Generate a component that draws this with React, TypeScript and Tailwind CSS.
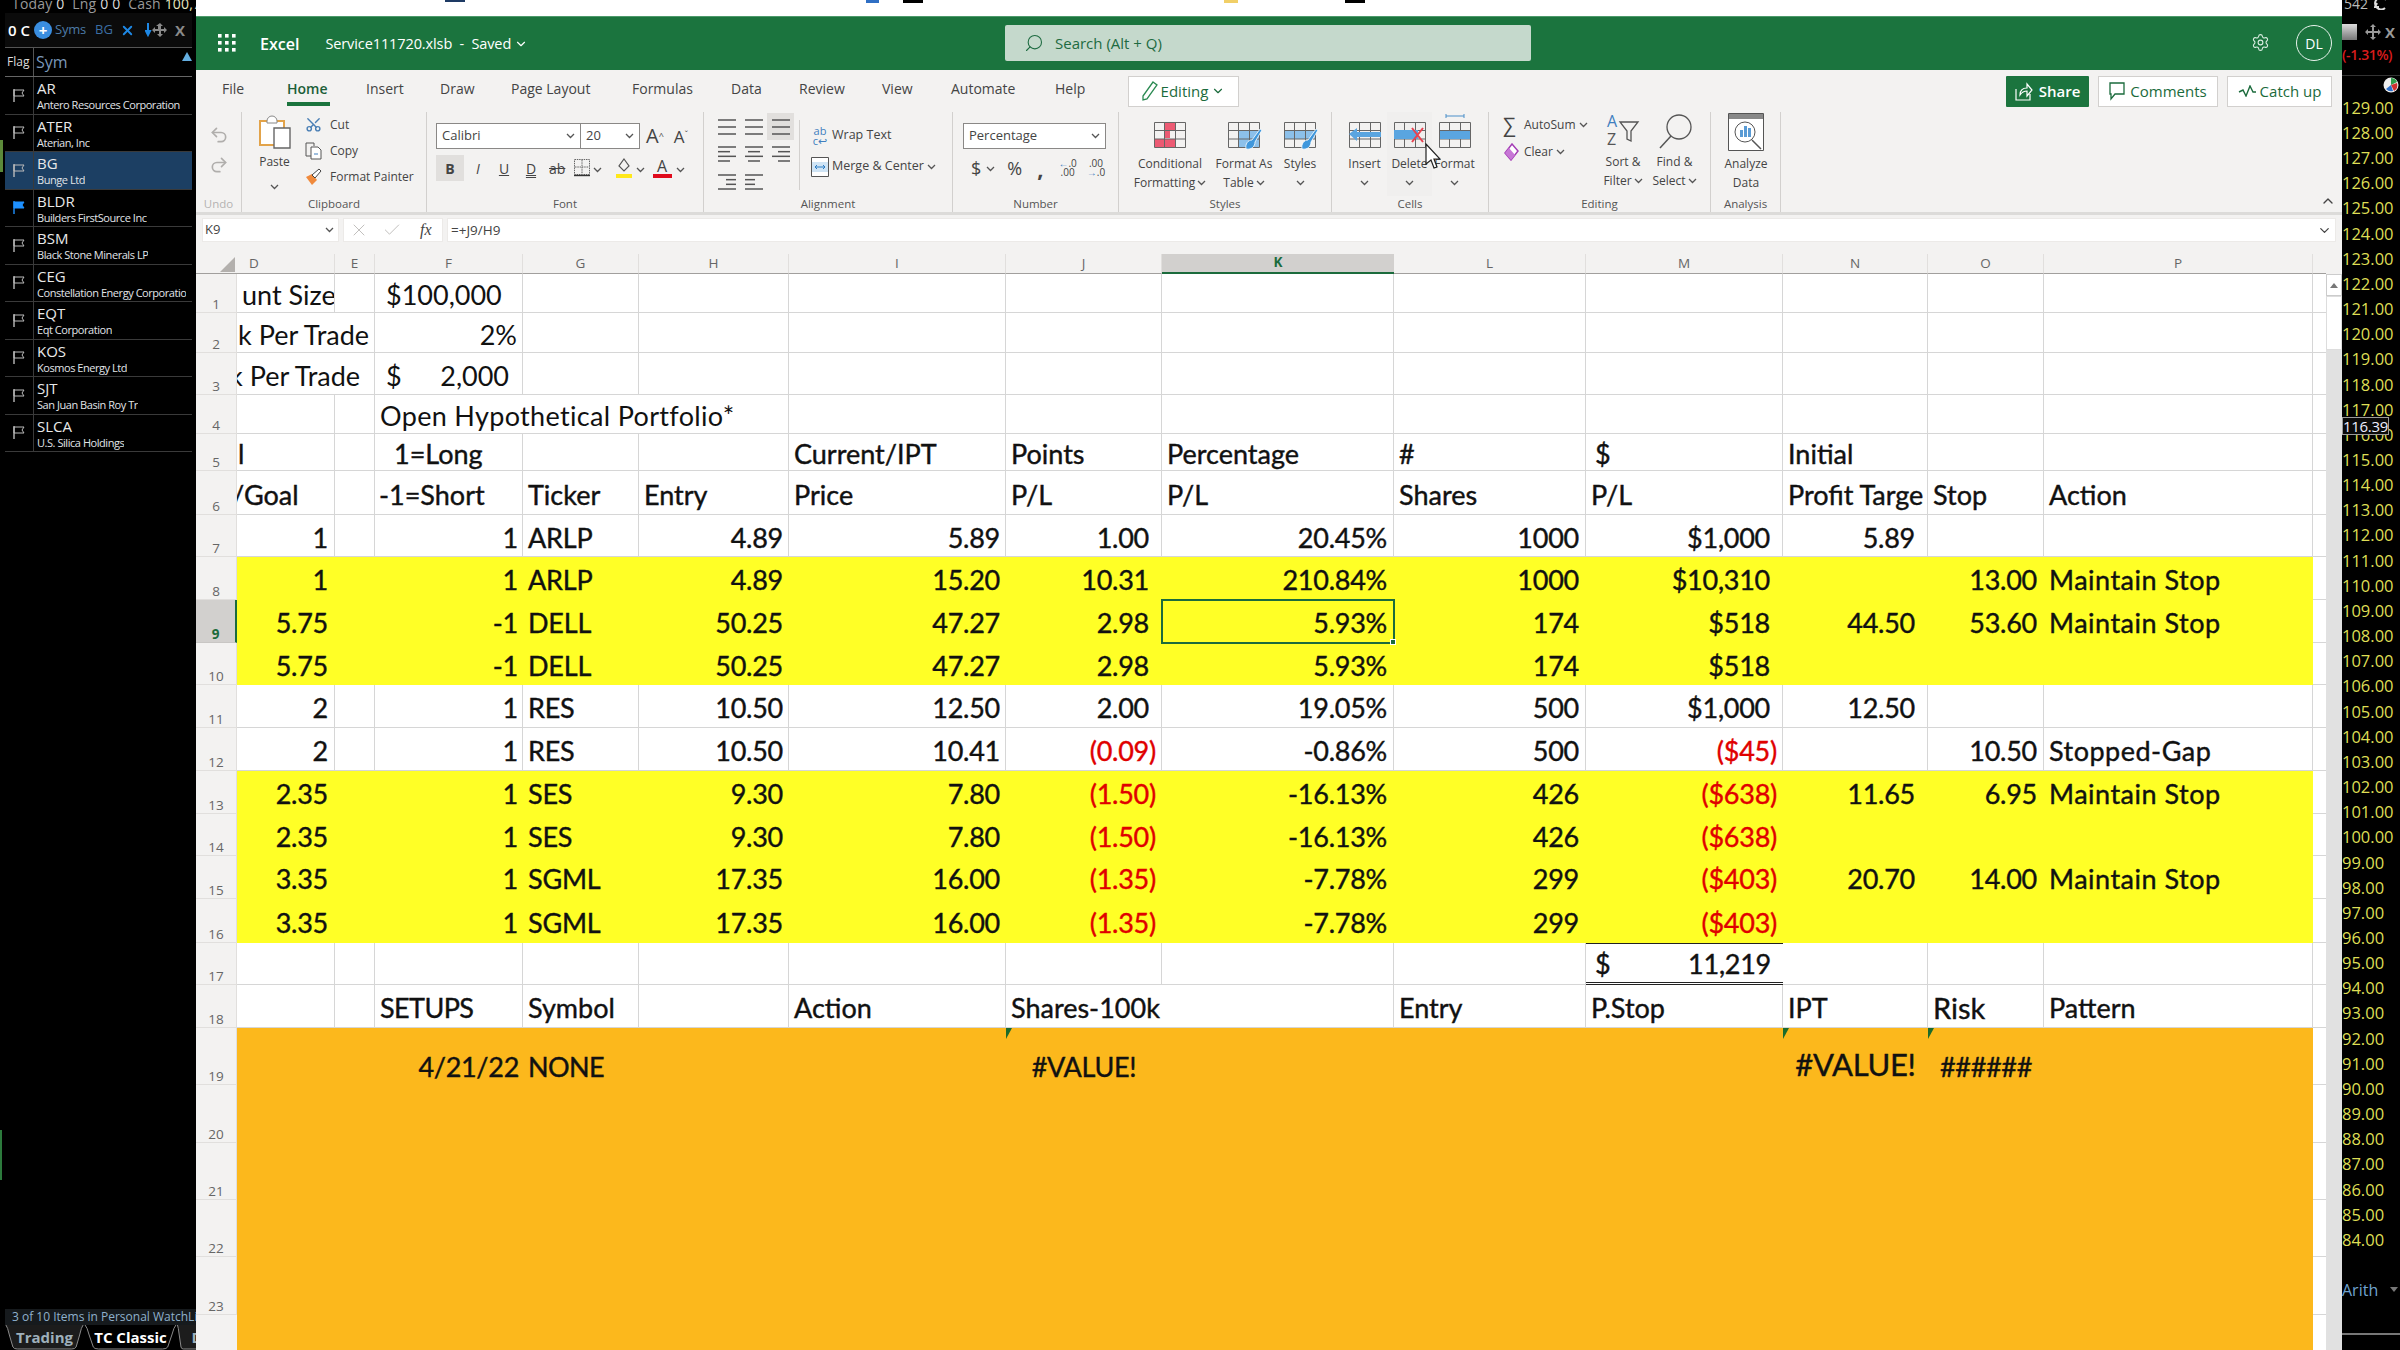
import React from "react";
import { Scissors, Undo2, Redo2, Settings, Search, X, Check, ChevronDown, ChevronUp } from "lucide-react";

const Chev = ({ c = "#555" }: { c?: string }) => (
  <svg width="9" height="6" viewBox="0 0 9 6" className="inline-block shrink-0"><path d="M1 1l3.5 3.5L8 1" fill="none" stroke={c} strokeWidth="1.3" /></svg>
);

const Flag = ({ on }: { on?: boolean }) => (
  <svg width="14" height="15" viewBox="0 0 14 15">
    <path d="M2 1v13" stroke={on ? "#1e90ff" : "#bbb"} strokeWidth="1.4" />
    <path d="M2 2h10l-2 3 2 3H2z" fill={on ? "#1e90ff" : "none"} stroke={on ? "#1e90ff" : "#bbb"} strokeWidth="1" />
  </svg>
);

const watch = [
  ["AR", "Antero Resources Corporation"],
  ["ATER", "Aterian, Inc"],
  ["BG", "Bunge Ltd"],
  ["BLDR", "Builders FirstSource Inc"],
  ["BSM", "Black Stone Minerals LP"],
  ["CEG", "Constellation Energy Corporatio"],
  ["EQT", "Eqt Corporation"],
  ["KOS", "Kosmos Energy Ltd"],
  ["SJT", "San Juan Basin Roy Tr"],
  ["SLCA", "U.S. Silica Holdings"],
];

const Tab = ({ w, on, children }: { w: string; on?: boolean; children: React.ReactNode }) => (
  <div className={`relative h-[25px] flex items-center justify-center shrink-0 ${w}`}>
    <svg className="absolute inset-0 w-full h-full" viewBox="0 0 90 25" preserveAspectRatio="none">
      <path d="M1 0 Q3 2 5 10 L9 22 Q10 24 14 24 H76 Q80 24 81 22 L85 10 Q87 2 89 0" fill={on ? "#000" : "#1c1c1c"} stroke="#8a8a8a" strokeWidth="1" vectorEffect="non-scaling-stroke" />
    </svg>
    <span className={`relative font-bold text-[15px] ${on ? "text-white" : "text-[#9fb0bb]"}`}>{children}</span>
  </div>
);

function LeftPanel() {
  return (
    <aside className="w-[196px] h-full shrink-0 bg-black flex flex-col relative font-['Open_Sans',sans-serif] overflow-hidden">
      <div className="absolute left-0 top-[140px] w-[3px] h-[32px] bg-[#5c8a3a]" />
      <div className="absolute left-0 top-[1130px] w-[2px] h-[50px] bg-[#2c7a3c]" />
      <div className="h-[13px] pl-[12px] text-[14px] leading-[8px] text-[#999] whitespace-nowrap overflow-hidden tracking-[0.2px]">
        <span>Today</span> <span className="text-[#ddd]">0</span>&nbsp; <span>Lng</span> <span className="text-[#ddd]">0 0</span>&nbsp; <span>Cash</span> <span className="text-[#e8e8c0]">100,7</span>
      </div>
      <div className="h-[35px] ml-[5px] w-[187px] flex items-center bg-[#0b0b0b] border-b border-[#555] relative whitespace-nowrap">
        <span className="ml-[3px] w-[26px] shrink-0 text-white font-semibold text-[15px]">0 C</span>
        <span className="w-[18px] h-[18px] shrink-0 rounded-full bg-[#3a8ee0] flex items-center justify-center text-white text-[15px] leading-none font-bold">+</span>
        <span className="ml-[3px] text-[#4d7ca8] text-[13px] tracking-[-0.2px]">Syms</span>
        <span className="ml-[9px] text-[#3c6ea5] text-[13px]">BG</span>
        <X className="ml-[7px] shrink-0 text-[#1e88e5]" size={15} strokeWidth={3} />
        <svg className="ml-[10px] shrink-0" width="28" height="16" viewBox="0 0 28 16">
          <path d="M3 1v9M1 9l2 4 2-4z" stroke="#1e88e5" strokeWidth="2" fill="#1e88e5" />
          <path d="M15 1l3 3h-2v3h3V5l3 3-3 3v-2h-3v3h2l-3 3-3-3h2V9H10v2L7 8l3-3v2h3V4h-2z" fill="#8a8a8a" />
        </svg>
        <span className="ml-[2px] text-[#8a8a8a] font-bold text-[15px]">X</span>
      </div>
      <div className="ml-[5px] w-[187px] h-[29px] flex border-b border-[#666] relative">
        <div className="w-[29px] border-r border-[#555] flex items-center pl-[2px] text-[#ddd] text-[12px]">Flag</div>
        <div className="pl-[2px] flex items-center text-[#7a97b8] text-[16px]">Sym</div>
        <div className="absolute right-0 top-[4px] w-0 h-0 border-l-[5px] border-r-[5px] border-b-[9px] border-l-transparent border-r-transparent border-b-[#64aee0]" />
      </div>
      {watch.map(([s, n], i) => (
        <div key={s} className={`ml-[5px] w-[187px] h-[37.5px] flex border-b border-[#3a3a3a] ${i === 2 ? "bg-[#1c3f63]" : ""}`}>
          <div className="w-[29px] border-r border-[#3a3a3a] flex items-center pl-[7px]"><Flag on={i === 3} /></div>
          <div className="pl-[3px] pt-[1px] flex flex-col justify-center whitespace-nowrap overflow-hidden">
            <span className="text-[#e8e8e8] text-[15px] leading-[18px]">{s}</span>
            <span className="text-[#e0e4e8] text-[11px] leading-[15px] tracking-[-0.45px]">{n}</span>
          </div>
        </div>
      ))}
      <div className="mt-auto">
        <div className="h-[16px] ml-[5px] bg-[#161a1d] pl-[7px] text-[12px] leading-[16px] text-[#8fb1cc] whitespace-nowrap overflow-hidden">3 of 10 Items in Personal WatchLi</div>
        <div className="flex ml-[5px] h-[25px] pt-0">
          <Tab w="w-[79px]">Trading</Tab>
          <Tab w="w-[93px]" on>TC Classic</Tab>
          <Tab w="w-[40px]">D</Tab>
        </div>
      </div>
    </aside>
  );
}

const prices = Array.from({ length: 46 }, (_, i) => 129 - i);

function RightPanel() {
  return (
    <aside className="w-[58px] h-full shrink-0 bg-black flex flex-col relative font-['Open_Sans',sans-serif] overflow-hidden">
      <div className="h-[16px] flex justify-between items-start text-[#bbb] text-[14px] leading-[8px]">
        <span className="ml-[2px]">542</span>
        <svg className="mr-[12px]" width="14" height="10" viewBox="0 0 14 10"><path d="M12 0a6 6 0 1 0-1 8M3 3l-2 4 4 0" fill="none" stroke="#ddd" strokeWidth="2" /></svg>
      </div>
      <div className="h-[32px] flex items-center">
        <div className="w-[15px] h-[16px] bg-gradient-to-b from-[#ddd] to-[#777]" />
        <svg className="ml-[8px]" width="16" height="16" viewBox="0 0 16 16"><path d="M8 0l3 3H9v4h4V5l3 3-3 3V9H9v4h2l-3 3-3-3h2V9H3v2L0 8l3-3v2h4V3H5z" fill="#999" /></svg>
        <span className="ml-[4px] text-[#999] font-bold text-[15px]">X</span>
      </div>
      <div className="h-[28px] text-[#d91c1c] text-[14px] leading-[14px] whitespace-nowrap border-b border-[#333] font-semibold tracking-[-0.4px]">(-1.31%)</div>
      <div className="h-[20.5px] -mt-[1px] flex justify-end items-center pr-[1px]">
        <svg width="16" height="16" viewBox="0 0 16 16">
          <circle cx="8" cy="8" r="7.5" fill="#eee" />
          <path d="M8 8L8 1a7 7 0 0 1 6 4z" fill="#2e9e4a" /><path d="M8 8l6-2a7 7 0 0 1-3 8z" fill="#d03030" /><path d="M8 8l2 6a7 7 0 0 1-7-2z" fill="#2c6fc9" />
        </svg>
      </div>
      {prices.map((p) => (
        <div key={p} className="h-[25.16px] shrink-0 flex items-center text-[16.5px] text-[#dede55] whitespace-nowrap leading-none">{p.toFixed(2)}</div>
      ))}
      <div className="mt-[26px] flex justify-between items-center text-[#6fa3cf] text-[16px] leading-[22px]">
        <span>Arith</span>
        <span className="mr-[2px] w-0 h-0 border-l-[4px] border-r-[4px] border-t-[5px] border-l-transparent border-r-transparent border-t-[#777]" />
      </div>
      <div className="mt-[32px] h-[2px] bg-[#777]" />
      <div className="absolute left-0 top-[417px] w-[47px] h-[18px] bg-[#0a0a0a] border border-[#9a9a9a] flex items-center text-[#eef] text-[15px] leading-none tracking-[-0.3px]">116.39</div>
    </aside>
  );
}

const Lines = ({ rows }: { rows: [number, number][] }) => (
  <svg width="20" height="18" viewBox="0 0 20 18">
    {rows.map(([a, b], i) => <path key={i} d={`M${a} ${2 + i * (14 / (rows.length - 1))}H${b}`} stroke="#555" strokeWidth="1.5" />)}
  </svg>
);

const Tbl = ({ children, top }: { children?: React.ReactNode; top?: React.ReactNode }) => (
  <svg width="36" height="38" viewBox="0 0 36 38">
    <g transform="translate(2 9)">
      {children}
      <path d="M.5.5h31v25H.5zM10.5.5v25M21.5.5v25M.5 8.5h31M.5 17h31" fill="none" stroke="#666" strokeWidth="1" />
    </g>
    {top}
  </svg>
);

const Brush = () => <path d="M20 36c6 1 9-3 9-7l7-12-2-1-8 11c-4 0-7 4-6 9z" fill="#3f97dc" stroke="#fff" strokeWidth=".8" />;

const VBtn = ({ w, icon, l1, l2, h = "h-[42px]" }: { w: string; icon: React.ReactNode; l1: React.ReactNode; l2?: React.ReactNode; h?: string }) => (
  <div className={`flex flex-col items-center shrink-0 ${w}`}>
    <div className={`${h} w-full flex items-end justify-center pb-[3px]`}>{icon}</div>
    <div className="h-[19px] leading-[19px] whitespace-nowrap">{l1}</div>
    <div className="h-[19px] leading-[19px] whitespace-nowrap flex items-center gap-[2px]">{l2 ?? <Chev />}</div>
  </div>
);

const Group = ({ w, label, light, children }: { w: string; label: string; light?: boolean; children: React.ReactNode }) => (
  <div className={`${w} shrink-0 h-[100px] flex flex-col border-r border-[#d2d0ce]`}>
    <div className="h-[84px] flex">{children}</div>
    <div className={`h-[16px] leading-[16px] text-center text-[11.5px] ${light ? "text-[#b5b3b1]" : "text-[#555]"}`}>{label}</div>
  </div>
);

const Select = ({ w, text, extra }: { w: string; text: string; extra?: string }) => (
  <div className={`${w} h-[26px] flex items-center justify-between px-[5px] bg-white border-[#8a8886] ${extra ?? "border"}`}>
    <span className="text-[13px] text-[#444]">{text}</span><Chev />
  </div>
);

const Ribbon = () => (
  <div className="h-[100px] flex bg-[#f3f2f1] text-[12px] text-[#444]">
    <Group w="w-[46px]" label="Undo" light>
      <div className="w-full flex flex-col items-center pt-[13px] gap-[10px] text-[#b0aeac]"><Undo2 size={20} /><Redo2 size={20} /></div>
    </Group>
    <Group w="w-[185px]" label="Clipboard">
      <div className="w-[63px] flex flex-col items-center pl-[2px]">
        <svg className="mt-[3px]" width="36" height="34" viewBox="0 0 36 34">
          <path d="M3 6h24v24H3z" fill="#fff" stroke="#e2a34a" strokeWidth="2" /><path d="M10 6a5 5 0 0 1 10 0v2H10z" fill="#fff" stroke="#888" />
          <path d="M17 13h16v20H17z" fill="#fff" stroke="#666" strokeWidth="1.4" />
        </svg>
        <span className="mt-[4px] leading-[18px]">Paste</span>
        <span className="mt-[6px]"><Chev /></span>
      </div>
      <div className="flex flex-col">
        <div className="h-[25px] flex items-center gap-[8px]"><Scissors size={17} className="text-[#4a7fb5] rotate-[-90deg]" /><span>Cut</span></div>
        <div className="h-[27px] flex items-center gap-[8px]">
          <svg width="17" height="18" viewBox="0 0 17 18"><path d="M1 1h8l0 3M1 1v13h5" fill="none" stroke="#555" /><path d="M6 5h7l3 3v9H6z" fill="#fff" stroke="#555" /><path d="M9 12h4" stroke="#3f7fbf" /></svg>
          <span>Copy</span>
        </div>
        <div className="h-[26px] flex items-center gap-[8px]">
          <svg width="17" height="18" viewBox="0 0 17 18"><path d="M1 9l6-3 5 6-5 5z" fill="#f08a3c" /><path d="M7 7l7-6 2 2-6 7z" fill="#fff" stroke="#444" /></svg>
          <span className="whitespace-nowrap">Format Painter</span>
        </div>
      </div>
    </Group>
    <Group w="w-[277px]" label="Font">
      <div className="pl-[9px] pt-[11px] flex flex-col">
        <div className="flex items-center">
          <Select w="w-[145px]" text="Calibri" />
          <Select w="w-[59px]" text="20" extra="border border-l-0" />
          <span className="ml-[6px] text-[20px] leading-none text-[#444]">A<sup className="text-[9px]">^</sup></span>
          <span className="ml-[10px] text-[17px] leading-none text-[#444]">A<sup className="text-[9px]">ˇ</sup></span>
        </div>
        <div className="flex items-center mt-[6px] h-[26px] text-[14px] text-[#444]">
          <span className="w-[28px] h-[26px] bg-[#e1dfdd] flex items-center justify-center font-bold">B</span>
          <span className="ml-[8px] w-[12px] text-center italic">I</span>
          <span className="ml-[13px] w-[14px] text-center underline">U</span>
          <span className="ml-[13px] w-[14px] text-center underline decoration-double">D</span>
          <span className="ml-[11px] w-[16px] text-center line-through">ab</span>
          <svg className="ml-[9px]" width="16" height="18" viewBox="0 0 16 18"><path d="M.5.5h15v15H.5zM8 1v14M1 8h14" fill="none" stroke="#666" strokeDasharray="1.5 .8" /><path d="M0 16.5h16" stroke="#333" strokeWidth="1.4" /></svg>
          <span className="ml-[3px]"><Chev /></span>
          <svg className="ml-[13px]" width="18" height="20" viewBox="0 0 18 20"><path d="M9 1l5 7-5 5-5-5z" fill="none" stroke="#555" strokeWidth="1.2" /><path d="M1 16h16v4H1z" fill="#ffe81a" /></svg>
          <span className="ml-[3px]"><Chev /></span>
          <span className="ml-[7px] w-[20px] flex flex-col items-center leading-[16px] text-[16px]">A<span className="w-[19px] h-[4px] bg-[#e00b1c]" /></span>
          <span className="ml-[4px]"><Chev /></span>
        </div>
      </div>
    </Group>
    <Group w="w-[249px]" label="Alignment">
      <div className="pl-[9px] pt-[1px] grid grid-cols-[27px_27px_27px] grid-rows-[27px_28px_27px] place-items-center">
        <Lines rows={[[1, 19], [1, 19], [1, 19]]} />
        <Lines rows={[[1, 19], [1, 19], [1, 19]]} />
        <div className="w-[27px] h-[27px] bg-[#e1dfdd] flex items-center justify-center"><Lines rows={[[1, 19], [1, 19], [1, 19]]} /></div>
        <Lines rows={[[1, 19], [1, 13], [1, 19], [1, 13]]} />
        <Lines rows={[[1, 19], [4, 16], [1, 19], [4, 16]]} />
        <Lines rows={[[1, 19], [7, 19], [1, 19], [7, 19]]} />
        <Lines rows={[[1, 19], [9, 19], [9, 19], [1, 19]]} />
        <Lines rows={[[1, 19], [1, 11], [1, 11], [1, 19]]} />
        <span />
      </div>
      <div className="ml-[5px] mt-[8px] h-[70px] border-l border-[#d2d0ce] pl-[11px] flex flex-col">
        <div className="h-[31px] flex items-center gap-[3px] whitespace-nowrap">
          <span className="w-[18px] text-[11px] leading-[10px] text-[#3f7fbf] text-center">ab<br />c↩</span><span className="text-[12.5px]">Wrap Text</span>
        </div>
        <div className="h-[31px] flex items-center gap-[3px] whitespace-nowrap">
          <svg width="18" height="20" viewBox="0 0 18 20"><path d="M.5.5h17v19H.5z" fill="#fff" stroke="#555" /><path d="M1 5h16v10H1z" fill="#cfe4f5" /><path d="M4 10h10M4 10l2-2M4 10l2 2M14 10l-2-2M14 10l-2 2" stroke="#2b7cc4" fill="none" /></svg>
          <span className="text-[12.5px]">Merge &amp; Center</span><Chev />
        </div>
      </div>
    </Group>
    <Group w="w-[166px]" label="Number">
      <div className="pl-[10px] pt-[11px] flex flex-col">
        <Select w="w-[143px]" text="Percentage" />
        <div className="mt-[6px] h-[26px] flex items-center text-[#444]">
          <span className="ml-[8px] text-[18px] leading-none">$</span><span className="ml-[5px]"><Chev /></span>
          <span className="ml-[12px] text-[18px] leading-none">%</span>
          <span className="ml-[15px] text-[22px] leading-none font-bold">,</span>
          <span className="ml-[15px] text-[10px] leading-[9px] text-center"><span className="text-[#3f7fbf]">←</span>.0<br />.00</span>
          <span className="ml-[10px] text-[10px] leading-[9px] text-center">.00<br /><span className="text-[#3f7fbf]">→</span>.0</span>
        </div>
      </div>
    </Group>
    <Group w="w-[213px]" label="Styles">
      <div className="pl-[13px] flex">
        <VBtn w="w-[76px]" l1="Conditional" l2={<>Formatting<Chev /></>} icon={<Tbl><path d="M11 0h10v8H11zM11 8h5v8h-5zM1 17h20v8H1z" fill="#ec5a73" /></Tbl>} />
        <VBtn w="w-[72px]" l1="Format As" l2={<>Table<Chev /></>} icon={<Tbl top={<Brush />}><path d="M11 9h20v16H11z" fill="#8cc0ea" /></Tbl>} />
        <VBtn w="w-[40px]" l1="Styles" icon={<Tbl top={<Brush />}><path d="M1 9h30v8H1z" fill="#8cc0ea" /></Tbl>} />
      </div>
    </Group>
    <Group w="w-[157px]" label="Cells">
      <div className="pl-[10px] flex">
        <VBtn w="w-[45px]" l1="Insert" icon={<Tbl top={<path d="M2 21l8-6v4h24v5H10v4z" fill="#5aa5e0" />} />} />
        <div className="w-[45px] bg-[#f0efee]"><VBtn w="w-[45px]" l1="Delete" icon={<Tbl top={<><path d="M2 17h24v9H2z" fill="#5aa5e0" /><path d="M20 15l11 14M31 15L20 29" stroke="#e8414f" strokeWidth="2" /></>} />} /></div>
        <VBtn w="w-[45px]" l1="Format" icon={<Tbl top={<><path d="M3 18h30v8H3z" fill="#5aa5e0" /><path d="M9 3h18M9 1v4M27 1v4" stroke="#4a8fc9" /></>} />} />
      </div>
    </Group>
    <Group w="w-[222px]" label="Editing">
      <div className="pl-[14px] w-[108px] flex flex-col shrink-0">
        <div className="h-[26px] flex items-center gap-[3px] whitespace-nowrap"><span className="text-[20px] leading-none w-[18px] text-[#444]">∑</span><span>AutoSum</span><Chev /></div>
        <div className="h-[28px] flex items-center gap-[3px] whitespace-nowrap">
          <svg width="18" height="18" viewBox="0 0 18 18"><path d="M9 1l6 7-7 9-6-7z" fill="#fff" stroke="#a43db5" strokeWidth="1.5" /><path d="M2 10l4-5 6 7-4 5z" fill="#c777d6" /></svg>
          <span>Clear</span><Chev />
        </div>
      </div>
      <VBtn w="w-[52px]" h="h-[40px]" l1="Sort &" l2={<>Filter<Chev /></>} icon={
        <svg width="34" height="36" viewBox="0 0 34 36"><text x="1" y="14" fontSize="16" fill="#3f7fbf" fontFamily="Open Sans">A</text><text x="1" y="32" fontSize="16" fill="#555" fontFamily="Open Sans">Z</text><path d="M14 9h18l-7 9v10l-4-2v-8z" fill="none" stroke="#555" strokeWidth="1.3" /></svg>
      } />
      <VBtn w="w-[51px]" h="h-[40px]" l1="Find &" l2={<>Select<Chev /></>} icon={
        <svg width="34" height="36" viewBox="0 0 34 36"><circle cx="21" cy="14" r="12" fill="none" stroke="#555" strokeWidth="1.3" /><path d="M13 23L2 35" stroke="#555" strokeWidth="1.5" /></svg>
      } />
    </Group>
    <Group w="w-[70px]" label="Analysis">
      <VBtn w="w-[70px]" l1="Analyze" l2="Data" icon={
        <svg width="36" height="38" viewBox="0 0 36 38"><path d="M.5.5h35v37H.5z" fill="#fff" stroke="#555" /><path d="M1 1h34v5H1z" fill="#888" /><circle cx="17" cy="19" r="10" fill="#fff" stroke="#555" /><path d="M12 17h3v7h-3zM16 13h3v11h-3zM20 15h3v9h-3z" fill="#5a9bd5" /><path d="M24 27l9 9" stroke="#555" strokeWidth="1.5" /></svg>
      } />
    </Group>
    <div className="flex-1 flex items-end justify-end pb-[3px] pr-[6px]"><ChevronUp size={16} className="text-[#444]" /></div>
  </div>
);

const Top = () => (
  <>
    <div className="h-[16px] bg-white flex items-start">
      <div className="ml-[249px] w-[20px] h-[2px] bg-[#1e3a64]" />
      <div className="ml-[401px] w-[13px] h-[3px] bg-[#2f6fc4]" />
      <div className="ml-[24px] w-[20px] h-[3px] bg-black" />
      <div className="ml-[301px] w-[14px] h-[3px] bg-[#f1cf67]" />
      <div className="ml-[107px] w-[20px] h-[3px] bg-black" />
    </div>
    <div className="h-[54px] bg-[#1b743e] border-t border-[#4d9a6b] flex items-center text-white relative font-['Open_Sans',sans-serif]">
      <svg className="ml-[22px] -mt-[2px]" width="18" height="18" viewBox="0 0 18 18" fill="#fff">
        {[0, 7, 14].flatMap((x) => [0, 7, 14].map((y) => <rect key={`${x}${y}`} x={x} y={y} width="3.6" height="3.6" />))}
      </svg>
      <span className="ml-[24px] font-semibold text-[16px]">Excel</span>
      <span className="ml-[26px] text-[14.5px] tracking-[-0.1px]">Service111720.xlsb&nbsp; -&nbsp; Saved</span>
      <ChevronDown size={14} className="ml-[3px]" />
      <div className="absolute left-[809px] top-[8px] w-[526px] h-[36px] bg-[#c5d9cc] rounded-[2px] flex items-center text-[#1e6b41] text-[15px]">
        <Search size={20} strokeWidth={1.3} className="ml-[19px] scale-x-[-1]" /><span className="ml-[11px]">Search (Alt + Q)</span>
      </div>
      <Settings size={19} strokeWidth={1.4} className="absolute left-[2055px] top-[16px] text-[#d9ece0]" />
      <div className="absolute left-[2100px] top-[8px] w-[36px] h-[36px] rounded-full border border-[#e8f2ec] flex items-center justify-center text-[14px]">DL</div>
    </div>
    <div className="h-[42px] bg-[#f3f2f1] flex items-center text-[14px] text-[#444] pl-[26px] font-['Open_Sans',sans-serif]">
      <span className="w-[65px] mb-[6px]">File</span>
      {[["Home", "w-[79px]"], ["Insert", "w-[74px]"], ["Draw", "w-[71px]"], ["Page Layout", "w-[121px]"], ["Formulas", "w-[99px]"], ["Data", "w-[68px]"], ["Review", "w-[83px]"], ["View", "w-[69px]"], ["Automate", "w-[104px]"], ["Help", "w-[73px]"]].map(([t, w]) => (
        <span key={t} className={`${w} mb-[6px] shrink-0 relative whitespace-nowrap ${t === "Home" ? "font-semibold text-[#1b5e38]" : ""}`}>
          {t}
          {t === "Home" && <span className="absolute left-0 w-[43px] top-[24px] h-[4px] bg-[#1b743e]" />}
        </span>
      ))}
      <div className="w-[111px] h-[31px] bg-white border border-[#d2d0ce] flex items-center justify-center gap-[3px] text-[#1b6b3c] text-[15px]">
        <svg width="16" height="20" viewBox="0 0 16 20"><path d="M11 1l4 3L5 18l-4 1 0-4z" fill="none" stroke="#2b8a52" strokeWidth="1.3" /></svg>
        Editing<ChevronDown size={14} />
      </div>
      <div className="ml-auto mr-[10px] flex gap-[9px] text-[15px]">
        <div className="w-[83px] h-[31px] bg-[#1b743e] text-white font-semibold flex items-center justify-center gap-[6px] rounded-[1px]">
          <svg width="18" height="20" viewBox="0 0 18 20"><path d="M1 8v11h14v-6M5 14c0-5 3-7 7-7V3l5 6-5 6v-5c-3 0-5 1-7 4z" fill="none" stroke="#fff" strokeWidth="1.2" /></svg>
          Share
        </div>
        <div className="w-[120px] h-[31px] bg-white border border-[#d2d0ce] text-[#1b6b3c] flex items-center justify-center gap-[5px]">
          <svg width="16" height="19" viewBox="0 0 16 19"><path d="M1 1h14v11H6l-4 5v-5H1z" fill="none" stroke="#1b6b3c" strokeWidth="1.3" /></svg>Comments
        </div>
        <div className="w-[105px] h-[31px] bg-white border border-[#d2d0ce] text-[#1b6b3c] flex items-center justify-center gap-[4px]">
          <svg width="18" height="12" viewBox="0 0 18 12"><path d="M1 7l4-2 3 6 4-10 3 6h3" fill="none" stroke="#1b6b3c" strokeWidth="1.4" /></svg>Catch up
        </div>
      </div>
    </div>
  </>
);

const FormulaBar = () => (
  <div className="h-[42px] bg-[#f3f2f1] border-t-[3px] border-[#dcdbd9] flex pt-[3px] pb-[12px] pl-[6px] pr-[6px] gap-[4px] text-[#444] font-['Open_Sans',sans-serif] text-[13px]">
    <div className="w-[137px] bg-white border border-[#eceae8] flex items-center justify-between pl-[2px] pr-[4px]">K9<Chev /></div>
    <div className="w-[100px] bg-white border border-[#eceae8] flex items-center pl-[5px] gap-[13px] text-[#c2c0be]">
      <X size={20} strokeWidth={1.2} /><Check size={20} strokeWidth={1.2} /><span className="ml-[5px] italic text-[#444] font-['Liberation_Serif',serif] text-[16px]">fx</span>
    </div>
    <div className="flex-1 bg-white border border-[#eceae8] flex items-center justify-between pl-[3px] pr-[3px] text-[13.5px]">=+J9/H9<ChevronDown size={15} /></div>
  </div>
);

const headers = ["D", "E", "F", "G", "H", "I", "J", "K", "L", "M", "N", "O", "P"];
const PAD = ["pr-[6px]", "pr-[6px]", "pr-[4px]", "pr-[6px]", "pr-[5px]", "pr-[5px]", "pr-[12px]", "pr-[6px]", "pr-[6px]", "pr-[12px]", "pr-[12px]", "pr-[6px]", "pr-[6px]"];
const PAD_NEG = "pr-[5px]";

const R: Record<number, { fill: "y" | "w"; v: string[] }> = {
  7: { fill: "w", v: ["1", "", "1", "ARLP", "4.89", "5.89", "1.00", "20.45%", "1000", "$1,000", "5.89", "", ""] },
  8: { fill: "y", v: ["1", "", "1", "ARLP", "4.89", "15.20", "10.31", "210.84%", "1000", "$10,310", "", "13.00", "Maintain Stop"] },
  9: { fill: "y", v: ["5.75", "", "-1", "DELL", "50.25", "47.27", "2.98", "5.93%", "174", "$518", "44.50", "53.60", "Maintain Stop"] },
  10: { fill: "y", v: ["5.75", "", "-1", "DELL", "50.25", "47.27", "2.98", "5.93%", "174", "$518", "", "", ""] },
  11: { fill: "w", v: ["2", "", "1", "RES", "10.50", "12.50", "2.00", "19.05%", "500", "$1,000", "12.50", "", ""] },
  12: { fill: "w", v: ["2", "", "1", "RES", "10.50", "10.41", "(0.09)", "-0.86%", "500", "($45)", "", "10.50", "Stopped-Gap"] },
  13: { fill: "y", v: ["2.35", "", "1", "SES", "9.30", "7.80", "(1.50)", "-16.13%", "426", "($638)", "11.65", "6.95", "Maintain Stop"] },
  14: { fill: "y", v: ["2.35", "", "1", "SES", "9.30", "7.80", "(1.50)", "-16.13%", "426", "($638)", "", "", ""] },
  15: { fill: "y", v: ["3.35", "", "1", "SGML", "17.35", "16.00", "(1.35)", "-7.78%", "299", "($403)", "20.70", "14.00", "Maintain Stop"] },
  16: { fill: "y", v: ["3.35", "", "1", "SGML", "17.35", "16.00", "(1.35)", "-7.78%", "299", "($403)", "", "", ""] },
};

const LINE = "border-r border-b border-[#d6d6d6]";
const BOLD = "[-webkit-text-stroke:0.4px_currentColor]";

const Cell = ({ className = "", children }: { className?: string; children?: React.ReactNode }) => (
  <div className={`${LINE} bg-white flex items-center pt-[3px] overflow-hidden whitespace-nowrap text-[#111] ${className}`}>{children}</div>
);
const Empty = ({ n }: { n: number }) => <>{Array.from({ length: n }, (_, i) => <Cell key={i} />)}</>;

const RowHead = ({ n, on }: { n: number; on?: boolean }) => (
  <div className={`border-b font-['Open_Sans',sans-serif] text-[13.5px] flex items-end justify-center pb-[1px] ${on ? "bg-[#d2d0ce] text-[#1b6b3c] font-bold border-[#c8c6c4] border-r-2 border-r-[#1b6b3c]" : "border-r bg-[#f3f2f1] text-[#666] border-[#e1dfdd]"}`}>{n}</div>
);
const Tail = () => <div className="bg-white border-b border-[#d6d6d6]" />;

const Tri = () => <div className="absolute left-0 top-0 w-0 h-0 border-t-[11px] border-r-[6px] border-t-[#1b6b2c] border-r-transparent" />;

function Sheet() {
  const dataRows: React.ReactNode[] = [];
  for (let n = 7; n <= 16; n++) {
    const { fill, v } = R[n];
    dataRows.push(
      <React.Fragment key={n}>
        <RowHead n={n} on={n === 9} />
        {v.map((t, c) => {
          const neg = t.startsWith("(");
          const left = c === 3 || c === 12;
          const sel = n === 9 && c === 7;
          return (
            <div key={c} className={`relative flex items-center pt-[3px] overflow-visible whitespace-nowrap border-r border-b ${fill === "y" ? "bg-[#ffff26] border-transparent" : "bg-white border-[#d6d6d6]"} ${left ? `pl-[5px] justify-start ${c === 12 ? "tracking-[0.5px]" : "tracking-[-0.2px]"}` : `justify-end tracking-[-0.25px] ${neg ? PAD_NEG : PAD[c]}`} ${neg ? "text-[#e00000]" : "text-[#111]"} ${BOLD} ${sel ? "outline-2 -outline-offset-1 outline-[#1b6b3c] z-10" : ""}`}>
              {t}
              {sel && <span className="absolute right-[-3px] bottom-[-3px] w-[6px] h-[6px] bg-[#1b6b3c] border border-white" />}
            </div>
          );
        })}
        <Tail />
      </React.Fragment>
    );
  }
  const orange = [19, 20, 21, 22, 23, 24];
  return (
    <div className="flex flex-1 min-h-0 font-['Lato',sans-serif] text-[27px] leading-none overflow-hidden">
      <div className="w-[2130px] grid grid-cols-[41px_98px_40px_148px_116px_150px_217px_156px_232px_192px_197px_145px_116px_269px_13px] grid-rows-[20px_39px_40px_42px_39px_37px_44px_42px_43px_43px_42px_43px_43px_43px_42px_43px_44px_42px_43px_57px_58px_57px_57px_58px_36px]">
        {/* header */}
        <div className="bg-[#f3f2f1] border-b border-[#a19f9d] flex items-end justify-end pr-[2px] pb-[1px]">
          <div className="w-0 h-0 border-l-[15px] border-b-[15px] border-l-transparent border-b-[#b3b0ad]" />
        </div>
        {headers.map((h) => (
          <div key={h} className={`font-['Open_Sans',sans-serif] text-[13.5px] flex items-center ${h === "D" ? "justify-start pl-[12px]" : "justify-center"} ${h === "K" ? "bg-[#d2d0ce] text-[#1b6b3c] font-bold border-b-2 border-[#1b6b3c]" : "bg-[#f3f2f1] text-[#666] border-b border-[#a19f9d] border-r border-r-[#e1dfdd]"}`}>{h}</div>
        ))}
        <div className="bg-[#f3f2f1] border-b border-[#a19f9d]" />

        {/* 1 */}
        <RowHead n={1} />
        <Cell className="pl-[5px]">unt Size</Cell><Cell />
        <Cell className="pl-[11px]">$100,000</Cell>
        <Empty n={10} /><Tail />
        {/* 2 */}
        <RowHead n={2} />
        <Cell className="col-span-2 pl-[1px]">k Per Trade</Cell>
        <Cell className="justify-end pr-[5px]">2%</Cell>
        <Empty n={10} /><Tail />
        {/* 3 */}
        <RowHead n={3} />
        <Cell className="col-span-2"><span className="-ml-[8px]">k Per Trade</span></Cell>
        <Cell className="justify-between pl-[11px] pr-[13px]"><span>$</span><span>2,000</span></Cell>
        <Empty n={10} /><Tail />
        {/* 4 */}
        <RowHead n={4} />
        <Cell /><Cell />
        <Cell className="col-span-3 pl-[5px] tracking-[0.33px]">Open Hypothetical Portfolio*</Cell>
        <Empty n={8} /><Tail />
        {/* 5 */}
        <RowHead n={5} />
        <Cell className={`pl-[1px] ${BOLD}`}>l</Cell><Cell />
        <Cell className={`pl-[19px] ${BOLD}`}>1=Long</Cell><Cell /><Cell />
        <Cell className={`pl-[5px] ${BOLD}`}>Current/IPT</Cell>
        <Cell className={`pl-[5px] ${BOLD}`}>Points</Cell>
        <Cell className={`pl-[5px] ${BOLD}`}>Percentage</Cell>
        <Cell className={`pl-[5px] ${BOLD}`}>#</Cell>
        <Cell className={`pl-[9px] ${BOLD}`}>$</Cell>
        <Cell className={`pl-[5px] ${BOLD}`}>Initial</Cell>
        <Cell /><Cell /><Tail />
        {/* 6 */}
        <RowHead n={6} />
        <Cell className={BOLD}><span className="-ml-[5px]">/Goal</span></Cell><Cell />
        {["-1=Short", "Ticker", "Entry", "Price", "P/L", "P/L", "Shares", "P/L", "Profit Targe", "Stop", "Action"].map((t, i) => (
          <Cell key={i} className={`${i === 0 ? "pl-[4px]" : "pl-[5px]"} ${BOLD}`}>{t}</Cell>
        ))}
        <Tail />
        {dataRows}
        {/* 17 */}
        <RowHead n={17} />
        <Empty n={9} />
        <div className={`bg-white flex items-center justify-between pl-[9px] pr-[12px] border-t border-t-[#222] border-b-[3px] border-double border-b-[#222] text-[#111] tracking-[-0.25px] ${BOLD}`}><span>$</span><span>11,219</span></div>
        <Empty n={3} /><Tail />
        {/* 18 */}
        <RowHead n={18} />
        <Cell /><Cell />
        <Cell className={`pl-[5px] tracking-[-0.6px] ${BOLD}`}>SETUPS</Cell>
        <Cell className={`pl-[5px] ${BOLD}`}>Symbol</Cell>
        <Cell />
        <Cell className={`pl-[5px] ${BOLD}`}>Action</Cell>
        <Cell className={`col-span-2 pl-[5px] ${BOLD}`}>Shares-100k</Cell>
        <Cell className={`pl-[5px] ${BOLD}`}>Entry</Cell>
        <Cell className={`pl-[5px] ${BOLD}`}>P.Stop</Cell>
        <Cell className={`pl-[5px] ${BOLD}`}>IPT</Cell>
        <Cell className={`pl-[5px] text-[29px] ${BOLD}`}>Risk</Cell>
        <Cell className={`pl-[5px] ${BOLD}`}>Pattern</Cell>
        <Tail />
        {/* 19-24 */}
        {orange.map((n) => (
          <React.Fragment key={n}>
            {n === 24 ? <div className="bg-[#f3f2f1]" /> : <RowHead n={n} />}
            <div className={`col-span-13 bg-[#fcb81c] ${n === 19 ? `grid grid-cols-[98px_40px_148px_116px_150px_217px_156px_232px_192px_197px_145px_116px_269px] ${BOLD} text-[#111]` : ""}`}>
              {n === 19 && (
                <>
                  <span /><span />
                  <span className="flex items-end justify-end pr-[4px] pb-[5px] tracking-[-0.3px]">4/21/22</span>
                  <span className="flex items-end pl-[5px] pb-[5px] tracking-[-0.6px]">NONE</span>
                  <span /><span />
                  <span className="relative flex items-end justify-center pb-[5px] tracking-[-0.3px]"><Tri />#VALUE!</span>
                  <span /><span /><span />
                  <span className="relative flex items-end justify-center pb-[5px] text-[31px] tracking-[-0.3px]"><Tri />#VALUE!</span>
                  <span className="relative flex items-end justify-center pb-[5px] tracking-[-0.3px]"><Tri />######</span>
                  <span />
                </>
              )}
            </div>
            <Tail />
          </React.Fragment>
        ))}
      </div>
      <div className="w-[16px] bg-[#e1e1e1] flex flex-col">
        <div className="h-[20px] bg-[#f3f2f1]" />
        <div className="h-[22px] bg-white border border-[#ccc] flex items-center justify-center"><span className="w-0 h-0 border-l-[4px] border-r-[4px] border-b-[5px] border-l-transparent border-r-transparent border-b-[#777]" /></div>
        <div className="h-[54px] bg-white border border-[#ddd]" />
      </div>
    </div>
  );
}

export default function App() {
  return (
    <div className="w-[2400px] h-[1350px] flex bg-black overflow-hidden relative">
      <LeftPanel />
      <main className="w-[2146px] h-full shrink-0 flex flex-col bg-[#f3f2f1] relative">
        <Top />
        <div className="font-['Open_Sans',sans-serif]"><Ribbon /></div>
        <FormulaBar />
        <Sheet />
        <svg className="absolute left-[1229px] top-[143px]" width="16" height="26" viewBox="0 0 16 26"><path d="M1 1v20l5-4 3 8 3-1-3-8h6z" fill="#fff" stroke="#222" strokeWidth="1.2" /></svg>
      </main>
      <RightPanel />
    </div>
  );
}
